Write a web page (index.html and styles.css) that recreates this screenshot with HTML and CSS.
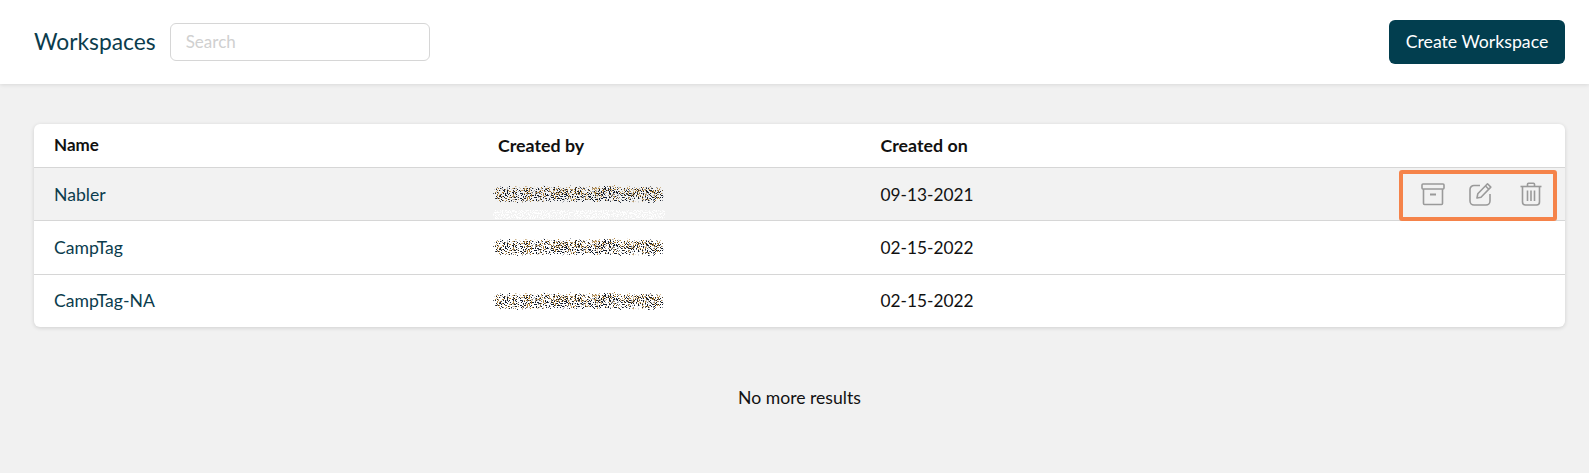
FILE: index.html
```html
<!DOCTYPE html>
<html lang="en">
<head>
<meta charset="utf-8">
<title>Workspaces</title>
<link rel="stylesheet" href="styles.css">
</head>
<body>
<svg class="defs" width="0" height="0" aria-hidden="true">
  <defs>
    <filter id="speck" x="-10%" y="-60%" width="120%" height="220%" color-interpolation-filters="sRGB">
      <feGaussianBlur in="SourceAlpha" stdDeviation="3 3" result="soft"/>
      <feTurbulence type="fractalNoise" baseFrequency="0.97" numOctaves="2" seed="7" result="noise"/>
      <feComposite in="noise" in2="soft" operator="arithmetic" k1="1" result="mixed"/>
      <feColorMatrix in="mixed" type="matrix" values="0 0 0 0 0.07  0 0 0 0 0.1  0 0 0 0 0.16  0 0 0 16 -9"/>
    </filter>
    <filter id="speck2" x="-10%" y="-60%" width="120%" height="220%" color-interpolation-filters="sRGB">
      <feGaussianBlur in="SourceAlpha" stdDeviation="3 3" result="soft"/>
      <feTurbulence type="fractalNoise" baseFrequency="0.93" numOctaves="2" seed="23" result="noise"/>
      <feComposite in="noise" in2="soft" operator="arithmetic" k1="1" result="mixed"/>
      <feColorMatrix in="mixed" type="matrix" values="0 0 0 0 0.68  0 0 0 0 0.5  0 0 0 0 0.22  0 0 0 16 -9.600"/>
    </filter>
    <filter id="smudge" x="0" y="0" width="100%" height="100%" color-interpolation-filters="sRGB">
      <feTurbulence type="fractalNoise" baseFrequency="0.85" numOctaves="2" seed="11"/>
      <feColorMatrix type="matrix" values="0 0 0 0 1  0 0 0 0 1  0 0 0 0 1  0 0 0 10 -4.800"/>
      <feComposite in2="SourceGraphic" operator="in"/>
    </filter>
    <g id="noise-mark">
      <rect x="-3" y="0" width="178" height="22" rx="8" filter="url(#speck)"/>
      <rect x="-3" y="0" width="178" height="22" rx="8" filter="url(#speck2)"/>
    </g>
    <rect id="noise-smudge" x="0" y="0" width="172" height="9" fill="#fff" filter="url(#smudge)"/>
  </defs>
</svg>

<header class="topbar">
  <div class="topbar-left">
    <h1 class="title">Workspaces</h1>
    <input class="search" type="text" placeholder="Search">
  </div>
  <button class="primary" type="button">Create Workspace</button>
</header>

<main class="content">
  <section class="card">
    <div class="row head">
      <div>Name</div>
      <div>Created by</div>
      <div>Created on</div>
    </div>
    <div class="row hover">
      <div class="name">Nabler</div>
      <div class="author"><svg class="mark" width="172" height="36" viewBox="0 0 172 36"><use href="#noise-mark"/><use href="#noise-smudge" y="27"/></svg></div>
      <div class="date">09-13-2021</div>
      <div class="actions">
        <svg class="icon" width="24" height="24" viewBox="0 0 24 24" fill="none" stroke="#9a9a9a" stroke-width="1.600"><rect x="1" y="2" width="22" height="5" rx="1"/><path d="M2.500 7v14.500a1 1 0 0 0 1 1h17a1 1 0 0 0 1-1V7"/><path d="M9 12.500h6" stroke-width="2"/></svg>
        <svg class="icon icon-edit" width="24" height="24" viewBox="0 0 24 24" fill="none" stroke="#9a9a9a" stroke-width="1.600"><path d="M12 3.500H6a4 4 0 0 0-4 4V19a4 4 0 0 0 4 4h12a4 4 0 0 0 4-4v-7"/><path d="M9 16l.8-4.200L19.500 1.800l3.300 3.300-9.800 10.100z" stroke-linejoin="round"/><path d="M17.500 4l3.300 3.300"/></svg>
        <svg class="icon" width="24" height="24" viewBox="0 0 24 24" fill="none" stroke="#9a9a9a" stroke-width="1.600"><path d="M1.500 4.500h21"/><path d="M8.500 4.500V2.200a1 1 0 0 1 1-1h5a1 1 0 0 1 1 1v2.300"/><path d="M3.500 4.500V20a3 3 0 0 0 3 3h11a3 3 0 0 0 3-3V4.500"/><path d="M8.500 8.500V19M12 8.500V19M15.500 8.500V19"/></svg>
      </div>
    </div>
    <div class="row">
      <div class="name">CampTag</div>
      <div class="author"><svg class="mark" width="172" height="36" viewBox="0 0 172 36"><use href="#noise-mark"/><use href="#noise-smudge" y="27"/></svg></div>
      <div class="date">02-15-2022</div>
      <div class="actions"></div>
    </div>
    <div class="row">
      <div class="name">CampTag-NA</div>
      <div class="author"><svg class="mark" width="172" height="24" viewBox="0 0 172 24"><use href="#noise-mark"/></svg></div>
      <div class="date">02-15-2022</div>
      <div class="actions"></div>
    </div>
    <div class="highlight"></div>
  </section>
  <p class="end">No more results</p>
</main>
</body>
</html>
```
FILE: styles.css
```css
* { box-sizing: border-box; }
html, body { margin: 0; height: 100%; }
body {
  background: #f1f1f1;
  font-family: Lato, "Open Sans", sans-serif;
  font-size: 17.600px;
  color: #111;
  overflow: hidden;
}
.defs { position: absolute; }
.topbar {
  height: 84px;
  background: #fff;
  display: flex;
  align-items: center;
  justify-content: space-between;
  padding: 0 24px 0 34px;
  box-shadow: 0 1px 4px rgba(0, 0, 0, .1);
}
.topbar-left { display: flex; align-items: center; gap: 14px; }
.title {
  margin: 0 0 3px;
  font-size: 22.800px;
  font-weight: 400;
  color: #0b3c4d;
}
.search {
  width: 260px;
  height: 38px;
  border: 1px solid #d6d6d6;
  border-radius: 6px;
  padding: 0 15px 2px;
  font: 400 17px Lato, sans-serif;
  outline: none;
  background: #fff;
}
.search::placeholder { color: #d0d0d0; opacity: 1; }
.primary {
  width: 176px;
  height: 44px;
  background: #023e4f;
  border: 0;
  border-radius: 6px;
  color: #fff;
  font: 400 17.700px Lato, sans-serif;
  padding: 0 0 2px;
}
.content { padding: 40px 24px 0 34px; }
.card {
  position: relative;
  background: #fff;
  border-radius: 6px;
  box-shadow: 0 1px 4px rgba(0, 0, 0, .14);
}
.row {
  display: grid;
  grid-template-columns: 444px 382.500px 1fr 156px;
  align-items: center;
  height: 53.330px;
  padding: 0 9px 0 20px;
  border-top: 1px solid #d6d6d6;
}
.head {
  height: 43px;
  border-top: 0;
  font-weight: 700;
  font-size: 17px;
  padding-bottom: 2px;
}
.head > div:nth-child(2), .head > div:nth-child(3) { font-size: 17.800px; }
.hover { background: #f2f2f2; }
.name { color: #0b3c4d; }
.date { font-size: 17.300px; }
.author { position: relative; height: 24px; z-index: 1; }
.mark { position: absolute; left: -5px; top: 1px; display: block; overflow: visible; }
.actions {
  display: flex;
  align-items: center;
  justify-content: flex-end;
  gap: 26px;
  padding-right: 13px;
}
.icon { display: block; }
.icon-edit { margin: 0 1px 0 -3px; }
.highlight {
  position: absolute;
  left: 1365px;
  top: 46px;
  width: 158px;
  height: 51px;
  border: 4px solid #f5834a;
  border-radius: 3px;
  pointer-events: none;
}
.end {
  margin: 60px 0 0;
  text-align: center;
  color: #111;
}
```
